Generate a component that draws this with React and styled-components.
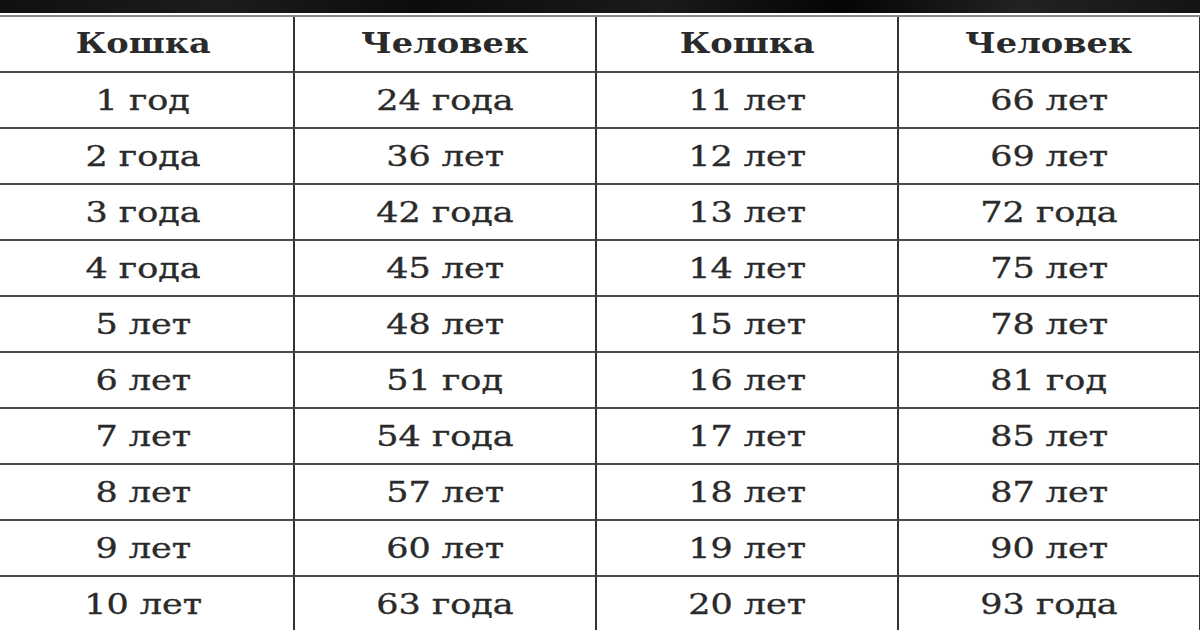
import React from "react";
import styled, { createGlobalStyle } from "styled-components";

const Global = createGlobalStyle`
  html, body { margin: 0; padding: 0; background: #fff; overflow: hidden; }
  body { width: 1200px; height: 630px; }
`;

const Page = styled.div`
  width: 1200px;
  height: 630px;
  overflow: hidden;
  background: #fff;
`;

const TopBand = styled.div`
  height: 13px;
  background: linear-gradient(90deg, #101010 0%, #1c1c1c 18%, #0c0c0c 35%, #1a1a1a 55%, #050505 70%, #222 85%, #141414 100%);
  margin-bottom: 2px;
`;

const Table = styled.div`
  display: grid;
  grid-template-columns: repeat(4, 302px);
  grid-auto-rows: 56px;
  margin-left: -7px;
  border-top: 2px solid #8a8a8a;
`;

const Cell = styled.div`
  box-sizing: border-box;
  display: flex;
  align-items: center;
  justify-content: center;
  border-right: 2px solid #333;
  border-bottom: 2px solid #4a4a4a;
  font-family: "DejaVu Serif", "Liberation Serif", serif;
  font-size: 28px;
  font-weight: ${(p) => (p.$head ? 700 : 400)};
  color: #2a2a2a;
  padding-bottom: ${(p) => (p.$head ? 1 : 0)}px;
`;

const Text = styled.span`
  display: inline-block;
  transform: scaleX(${(p) => (p.$head ? 1.2 : 1.25)});
  -webkit-text-stroke: ${(p) => (p.$head ? 0 : 0.35)}px #2a2a2a;
  white-space: nowrap;
`;

const rows = [
  ["1 год", "24 года", "11 лет", "66 лет"],
  ["2 года", "36 лет", "12 лет", "69 лет"],
  ["3 года", "42 года", "13 лет", "72 года"],
  ["4 года", "45 лет", "14 лет", "75 лет"],
  ["5 лет", "48 лет", "15 лет", "78 лет"],
  ["6 лет", "51 год", "16 лет", "81 год"],
  ["7 лет", "54 года", "17 лет", "85 лет"],
  ["8 лет", "57 лет", "18 лет", "87 лет"],
  ["9 лет", "60 лет", "19 лет", "90 лет"],
  ["10 лет", "63 года", "20 лет", "93 года"],
];

const head = ["Кошка", "Человек", "Кошка", "Человек"];

export default function App() {
  return (
    <Page>
      <Global />
      <TopBand />
      <Table>
        {head.map((h, i) => (
          <Cell key={"h" + i} $head>
            <Text $head>{h}</Text>
          </Cell>
        ))}
        {rows.map((r, ri) =>
          r.map((c, ci) => (
            <Cell key={ri + "-" + ci}>
              <Text>{c}</Text>
            </Cell>
          ))
        )}
      </Table>
    </Page>
  );
}
